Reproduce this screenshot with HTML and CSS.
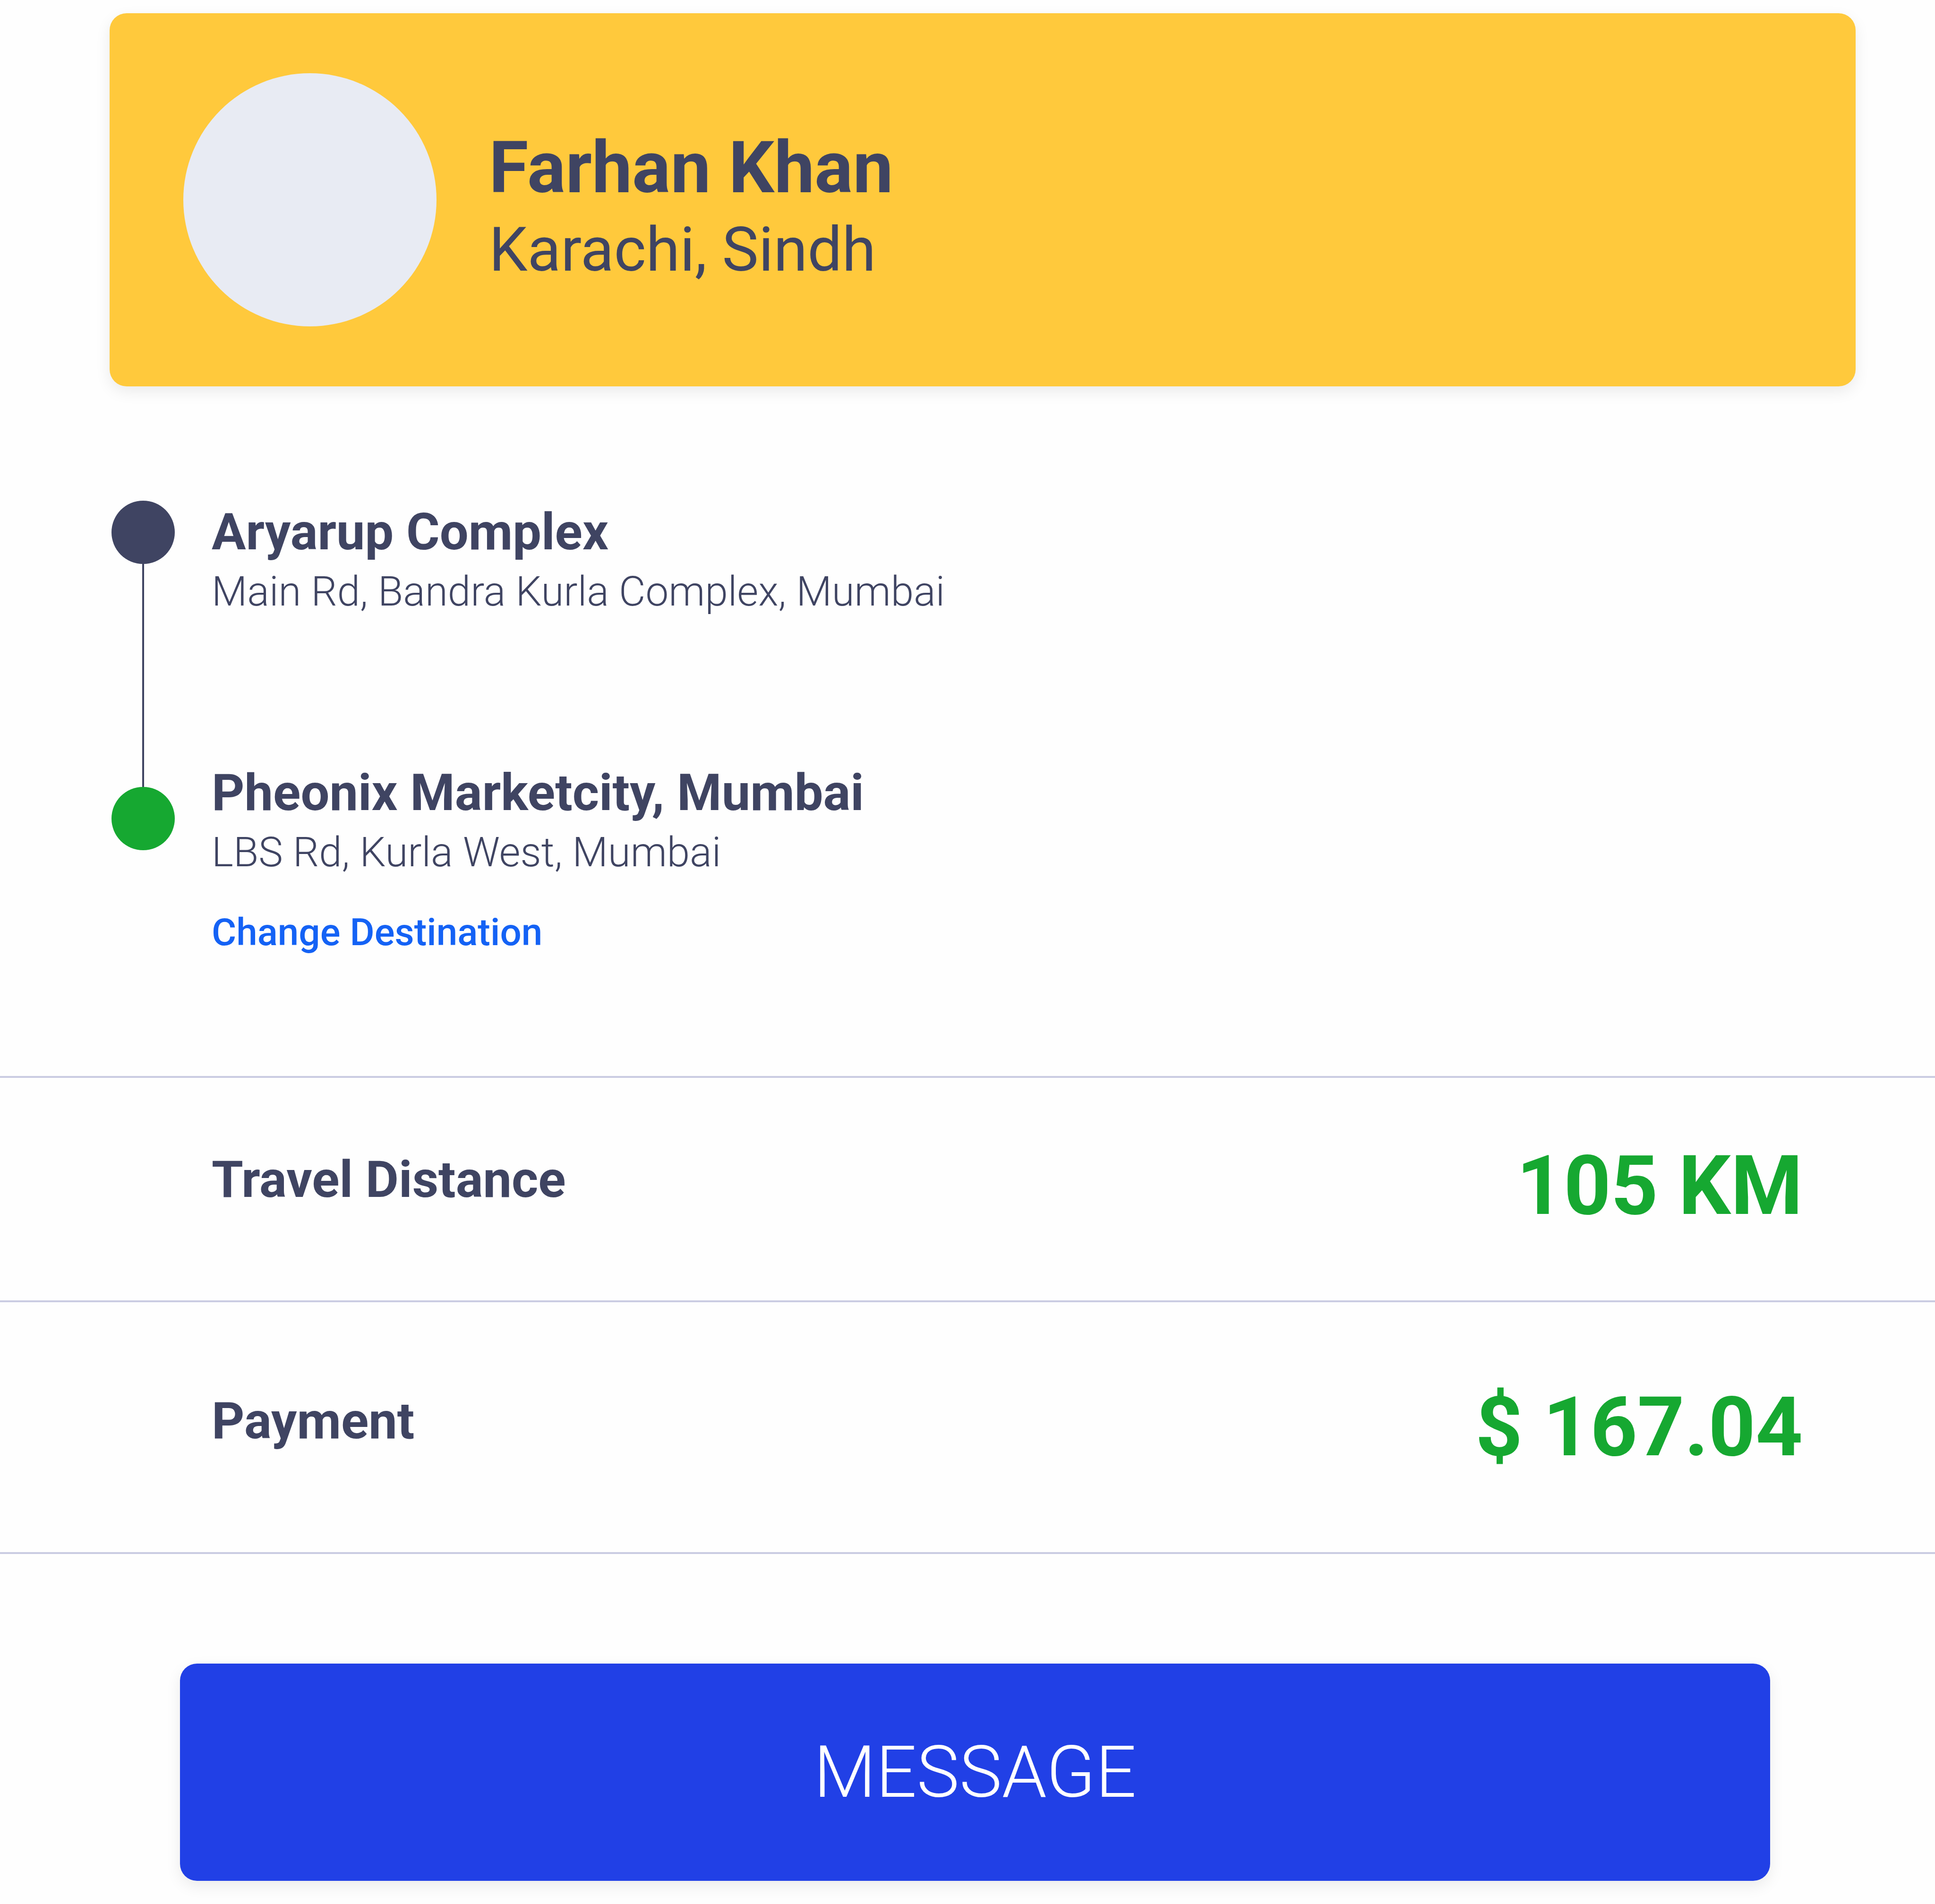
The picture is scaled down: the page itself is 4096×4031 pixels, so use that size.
FILE: index.html
```html
<!DOCTYPE html>
<html lang="en">
<head>
  <meta charset="utf-8">
  <meta name="viewport" content="width=device-width, initial-scale=1">
  <title>Ride details</title>
  <link rel="stylesheet" href="styles.css">
</head>
<body>
  <main class="ride">
    <header class="rider">
      <div class="rider-avatar"></div>
      <div class="rider-info">
        <h1 class="rider-name">Farhan Khan</h1>
        <p class="rider-city">Karachi, Sindh</p>
      </div>
    </header>

    <section class="route">
      <div class="route-track">
        <span class="route-dot"></span>
        <span class="route-line"></span>
        <span class="route-dot route-dot-end"></span>
      </div>
      <div class="route-stops">
        <div class="stop">
          <h2 class="stop-name">Aryarup Complex</h2>
          <p class="stop-address">Main Rd, Bandra Kurla Complex, Mumbai</p>
        </div>
        <div class="stop">
          <h2 class="stop-name">Pheonix Marketcity, Mumbai</h2>
          <p class="stop-address">LBS Rd, Kurla West, Mumbai</p>
          <a class="stop-change" href="#">Change Destination</a>
        </div>
      </div>
    </section>

    <dl class="summary">
      <div class="summary-row">
        <dt class="summary-label">Travel Distance</dt>
        <dd class="summary-value">105 KM</dd>
      </div>
      <div class="summary-row summary-row-total">
        <dt class="summary-label">Payment</dt>
        <dd class="summary-value">$ 167.04</dd>
      </div>
    </dl>

    <div class="actions">
      <button class="message-button" type="button">MESSAGE</button>
    </div>
  </main>
</body>
</html>
```
FILE: styles.css
```css
* {
  box-sizing: border-box;
}

body {
  margin: 0;
  background: #fefefe;
  color: #3f4462;
  font-family: Roboto, "Liberation Sans", sans-serif;
}

h1,
h2,
p,
dl,
dd {
  margin: 0;
}

.ride {
  display: flex;
  flex-direction: column;
  padding: 28px 0 48px;
}

/* Rider card */
.rider {
  display: flex;
  gap: 111px;
  margin: 0 168px 0 232px;
  padding: 127px 156px;
  border-radius: 36px;
  background: #ffc93c;
  box-shadow: 0 11px 32px rgba(0, 0, 0, 0.08);
}

.rider-avatar {
  flex: none;
  width: 536px;
  height: 536px;
  border-radius: 50%;
  background: #e8ebf3;
}

.rider-info {
  padding-top: 109px;
}

.rider-name {
  font-size: 152px;
  font-weight: 700;
  line-height: 182px;
}

.rider-city {
  font-size: 130px;
  font-weight: 400;
  line-height: 166px;
}

/* Route */
.route {
  display: flex;
  gap: 78px;
  padding: 242px 168px 254px 236px;
}

.route-track {
  display: flex;
  flex-direction: column;
  align-items: center;
  padding-bottom: 224px;
}

.route-dot {
  width: 134px;
  height: 134px;
  border-radius: 50%;
  background: #3f4462;
}

.route-dot-end {
  background: #16a831;
}

.route-line {
  flex: 1;
  width: 4px;
  background: #3f4462;
}

.route-stops {
  display: flex;
  flex-direction: column;
  gap: 300px;
}

.stop-name {
  font-size: 108px;
  font-weight: 700;
  line-height: 132px;
}

.stop-address {
  font-size: 87px;
  font-weight: 300;
  line-height: 120px;
}

.stop-change {
  display: block;
  margin-top: 60px;
  color: #1462f5;
  font-size: 80px;
  font-weight: 500;
  line-height: 100px;
  text-decoration: none;
}

/* Trip summary */
.summary {
  border-bottom: 4px solid #cacce2;
}

.summary-row {
  display: flex;
  justify-content: space-between;
  padding: 125px 280px 138px 448px;
  border-top: 4px solid #cacce2;
}

.summary-row-total {
  padding-top: 161px;
  padding-bottom: 160px;
}

.summary-label {
  padding-top: 24px;
  font-size: 108px;
  font-weight: 700;
  line-height: 132px;
}

.summary-value {
  color: #16a831;
  font-size: 174px;
  font-weight: 700;
  line-height: 208px;
}

/* Actions */
.actions {
  display: flex;
  padding: 232px 349px 0 381px;
}

.message-button {
  flex: 1;
  padding: 140px 0;
  border: 0;
  border-radius: 36px;
  background: #2140e6;
  box-shadow: 0 11px 32px rgba(0, 0, 0, 0.08);
  color: #fff;
  font-family: inherit;
  font-size: 152px;
  font-weight: 300;
  line-height: 180px;
}
```
